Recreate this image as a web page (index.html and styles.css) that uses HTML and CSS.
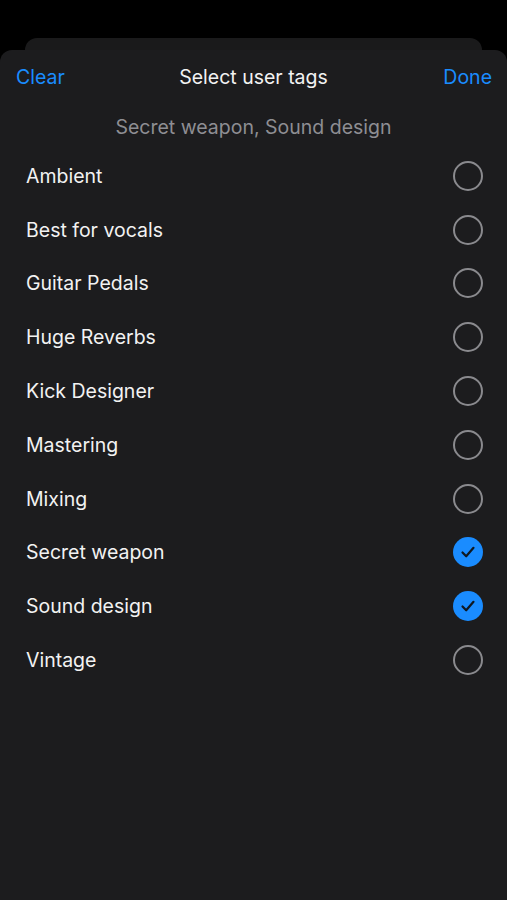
FILE: index.html
```html
<!DOCTYPE html>
<html lang="en">
<head>
  <meta charset="UTF-8">
  <meta name="viewport" content="width=device-width, initial-scale=1.0">
  <title>Select user tags</title>
  <link rel="stylesheet" href="styles.css">
</head>
<body>
  <div class="back-card"></div>
  <section class="sheet">
    <header class="sheet-header">
      <a href="#" class="header-btn">Clear</a>
      <h1>Select user tags</h1>
      <a href="#" class="header-btn done">Done</a>
    </header>
    <p class="selected-summary">Secret weapon, Sound design</p>
    <ul class="tag-list">
      <li class="tag-row"><span>Ambient</span><span class="check"></span></li>
      <li class="tag-row"><span>Best for vocals</span><span class="check"></span></li>
      <li class="tag-row"><span>Guitar Pedals</span><span class="check"></span></li>
      <li class="tag-row"><span>Huge Reverbs</span><span class="check"></span></li>
      <li class="tag-row"><span>Kick Designer</span><span class="check"></span></li>
      <li class="tag-row"><span>Mastering</span><span class="check"></span></li>
      <li class="tag-row"><span>Mixing</span><span class="check"></span></li>
      <li class="tag-row"><span>Secret weapon</span>
        <span class="check on">
          <svg viewBox="0 0 30 30" width="30" height="30"><path d="M9.5 15.5 L13.2 19.3 L20.5 10.8" fill="none" stroke="#101820" stroke-width="2.2" stroke-linecap="round" stroke-linejoin="round"/></svg>
        </span>
      </li>
      <li class="tag-row"><span>Sound design</span>
        <span class="check on">
          <svg viewBox="0 0 30 30" width="30" height="30"><path d="M9.5 15.5 L13.2 19.3 L20.5 10.8" fill="none" stroke="#101820" stroke-width="2.2" stroke-linecap="round" stroke-linejoin="round"/></svg>
        </span>
      </li>
      <li class="tag-row"><span>Vintage</span><span class="check"></span></li>
    </ul>
  </section>
</body>
</html>
```

FILE: styles.css
```css
:root {
  --sheet: #1c1c1e;
  --blue: #1a8cff;
  --gray: #8e8e93;
  --white: #f2f2f2;
}

* {
  margin: 0;
  padding: 0;
  box-sizing: border-box;
}

body {
  font-family: Inter, 'Noto Sans', Arial, sans-serif;
  background-color: #000;
  color: var(--white);
  height: 900px;
  overflow: hidden;
}

.back-card {
  margin: 38px 25px 0;
  height: 12px;
  background-color: #1a1a1b;
  border-radius: 12px 12px 0 0;
}

.sheet {
  background-color: var(--sheet);
  border-radius: 12px 12px 0 0;
  height: 850px;
}

.sheet-header {
  height: 54px;
  display: flex;
  justify-content: space-between;
  align-items: center;
  padding: 0 15px 0 16px;
  position: relative;
}

.sheet-header h1 {
  position: absolute;
  left: 0;
  right: 0;
  text-align: center;
  font-size: 19.5px;
  font-weight: 400;
  pointer-events: none;
}

.header-btn {
  color: var(--blue);
  text-decoration: none;
  font-size: 19.5px;
}

.selected-summary {
  height: 45px;
  display: flex;
  align-items: center;
  justify-content: center;
  color: var(--gray);
  font-size: 19.5px;
}

.tag-list {
  list-style: none;
}

.tag-row {
  height: 53.8px;
  display: flex;
  justify-content: space-between;
  align-items: center;
  padding: 0 24px 0 26px;
  font-size: 19.5px;
}

.check {
  width: 30px;
  height: 30px;
  border: 2px solid #8a8a8e;
  border-radius: 50%;
}

.check.on {
  border: none;
  background-color: var(--blue);
}

.check svg {
  display: block;
}
```
